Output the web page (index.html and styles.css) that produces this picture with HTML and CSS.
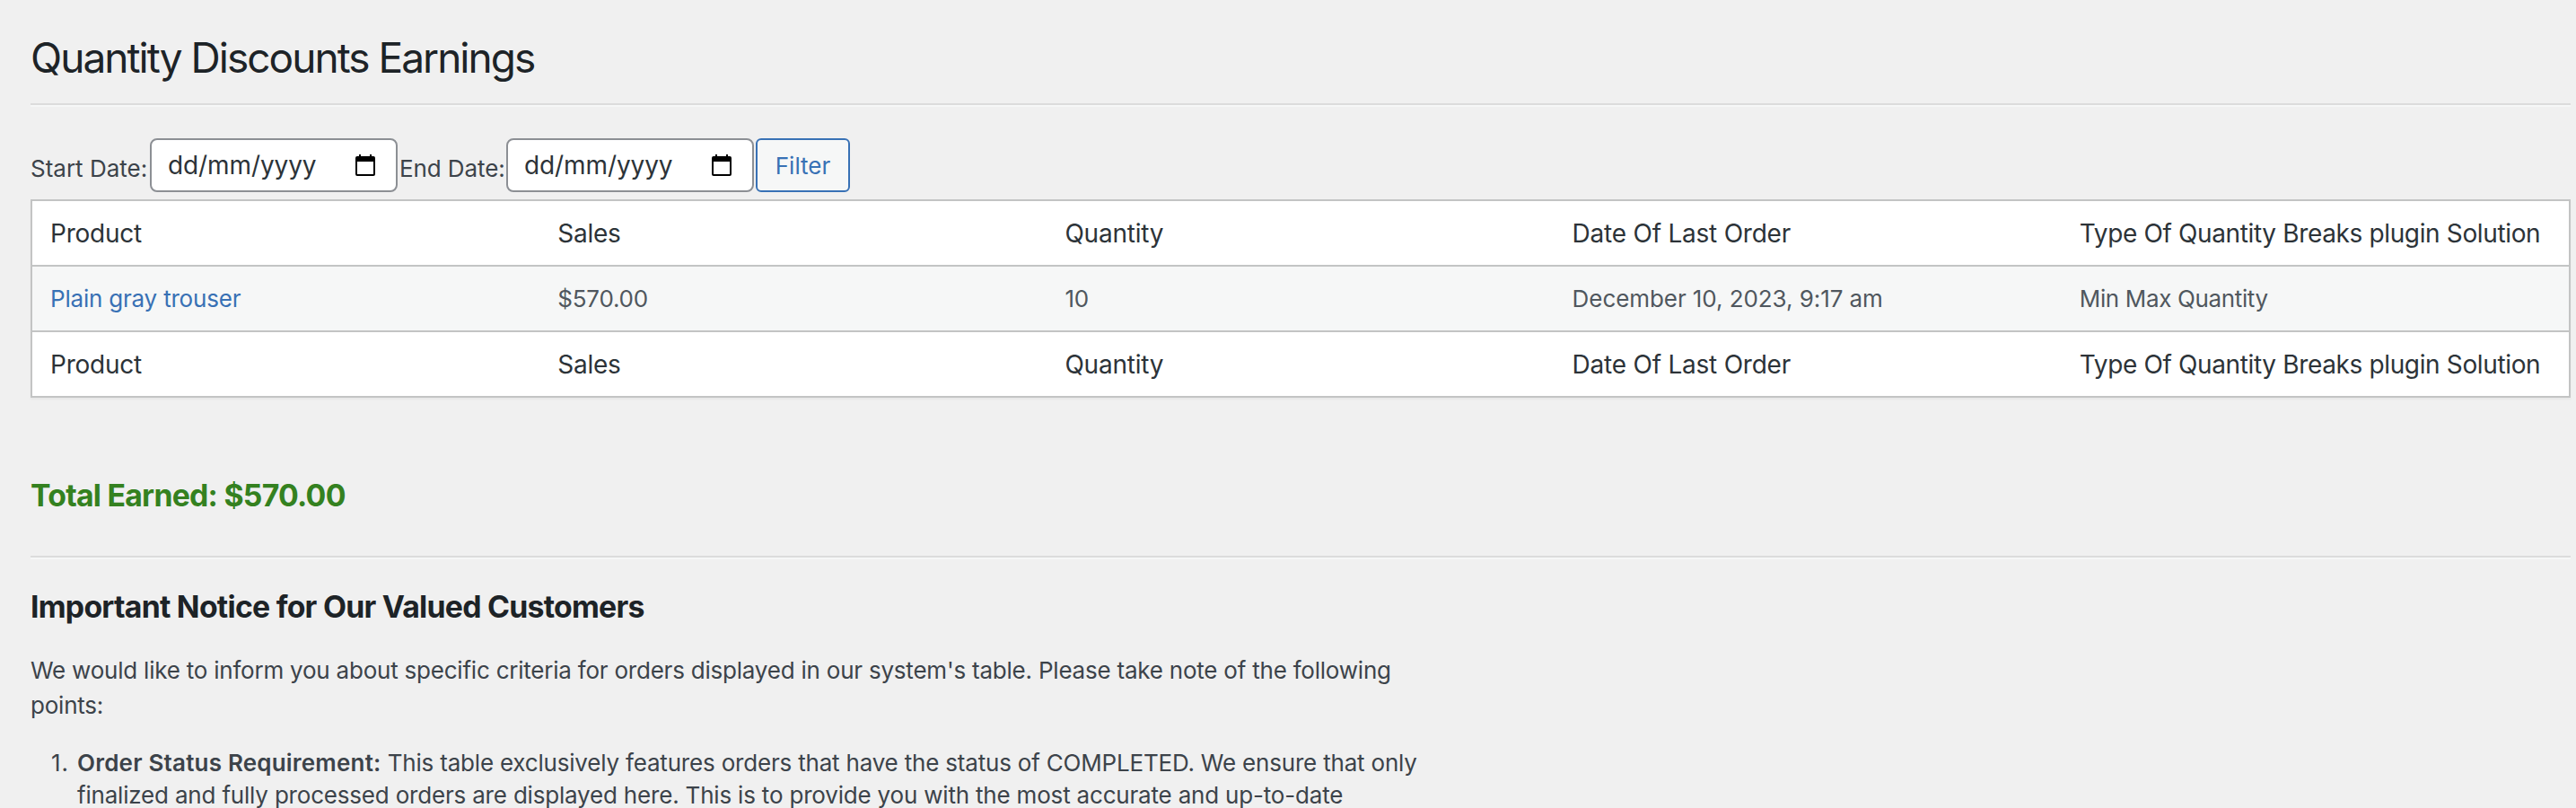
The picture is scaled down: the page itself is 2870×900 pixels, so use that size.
FILE: index.html
```html
<!DOCTYPE html>
<html lang="en">
<head>
<meta charset="utf-8">
<title>Quantity Discounts Earnings</title>
<link rel="stylesheet" href="styles.css">
</head>
<body>
<main class="wrap">
  <h1 class="title">Quantity Discounts Earnings</h1>
  <hr class="rule">
  <form class="filters">
    <label class="label label-start">Start Date:</label>
    <div class="date"><span class="placeholder">dd/mm/yyyy</span>
      <svg class="cal" viewBox="0 0 22 24"><path fill-rule="evenodd" d="M4 0h2v2h10V0h2v2h2a2 2 0 0 1 2 2v18a2 2 0 0 1-2 2H2a2 2 0 0 1-2-2V4a2 2 0 0 1 2-2h2zM2 8v14h18V8z"/></svg>
    </div>
    <label class="label label-end">End Date:</label>
    <div class="date"><span class="placeholder">dd/mm/yyyy</span>
      <svg class="cal" viewBox="0 0 22 24"><path fill-rule="evenodd" d="M4 0h2v2h10V0h2v2h2a2 2 0 0 1 2 2v18a2 2 0 0 1-2 2H2a2 2 0 0 1-2-2V4a2 2 0 0 1 2-2h2zM2 8v14h18V8z"/></svg>
    </div>
    <button class="button" type="button">Filter</button>
  </form>
  <div class="table">
    <div class="row head"><span>Product</span><span>Sales</span><span>Quantity</span><span>Date Of Last Order</span><span class="solution">Type Of Quantity Breaks plugin Solution</span></div>
    <div class="row data"><a class="link">Plain gray trouser</a><span>$570.00</span><span>10</span><span class="ordered">December 10, 2023, 9:17 am</span><span class="solution">Min Max Quantity</span></div>
    <div class="row head"><span>Product</span><span>Sales</span><span>Quantity</span><span>Date Of Last Order</span><span class="solution">Type Of Quantity Breaks plugin Solution</span></div>
  </div>
  <h2 class="total">Total Earned: $570.00</h2>
  <hr class="rule">
  <h2 class="notice-title">Important Notice for Our Valued Customers</h2>
  <p class="intro">We would like to inform you about specific criteria for orders displayed in our system's table. Please take note of the following<br>points:</p>
  <ol class="points">
    <li><span class="num">1.</span><span class="point"><b>Order Status Requirement:</b> This table exclusively features orders that have the status of COMPLETED. We ensure that only<br>finalized and fully processed orders are displayed here. This is to provide you with the most accurate and up-to-date</span></li>
  </ol>
</main>
</body>
</html>
```
FILE: styles.css
```css
* { box-sizing: border-box; }
html, body { height: 900px; overflow: hidden; }
body {
  margin: 0;
  background: #f0f0f0;
  color: #3c434a;
  font: 26px/36px Inter, "Liberation Sans", sans-serif;
  white-space: nowrap;
}
.wrap { padding: 0 6px 0 34px; }
.title {
  margin: 0;
  padding: 35px 0 20px;
  height: 115px;
  color: #1d2327;
  font-size: 46px;
  font-weight: 400;
  line-height: 58px;
  letter-spacing: -1.97px;
}
.rule { margin: 0; height: 4px; border: 0; border-top: 2px solid #dcdcdc; border-bottom: 2px solid #f6f7f7; }
.filters { display: flex; margin-top: 35px; height: 68px; }
.label { padding-top: 16px; height: 60px; }
.label-start { width: 133px; }
.label-end { width: 119px; margin-left: 2px; letter-spacing: -0.1px; }
.date {
  display: flex;
  justify-content: space-between;
  align-items: center;
  width: 276px;
  height: 60px;
  padding: 0 23px 0 18px;
  border: 2px solid #8c8f94;
  border-radius: 8px;
  background: #fff;
  color: #2c3338;
  font-size: 28px;
}
.placeholder { letter-spacing: -0.1px; }
.cal { width: 22px; height: 24px; fill: #000; }
.button {
  margin-left: 2px;
  width: 105px;
  height: 60px;
  padding: 1px 0 0;
  border: 2px solid #3871b5;
  border-radius: 6px;
  background: #f6f7f7;
  color: #3871b5;
  font: inherit;
}
.table { border: 2px solid #c3c4c4; background: #fff; box-shadow: 0 2px 2px rgba(0,0,0,.04); }
.row { display: grid; grid-template-columns: repeat(5, 1fr); height: 71px; align-items: center; }
.row > * { padding-left: 20px; min-width: 0; }
.head { color: #2c3338; font-size: 28px; letter-spacing: -0.23px; }
.data { height: 75px; border: solid #c3c4c4; border-width: 2px 0; background: #f6f7f7; color: #50575e; letter-spacing: -0.2px; }
.data .ordered { letter-spacing: -0.07px; }
.row .solution { letter-spacing: -0.36px; }
.link { color: #3871b5; }
.total, .notice-title { margin: 0; font-size: 33.8px; font-weight: 650; line-height: 44px; letter-spacing: -0.75px; }
.total { margin: 87px 0 45px; height: 44px; color: #348120; }
.notice-title { margin-top: 31px; color: #1d2327; }
.intro { margin: 29px 0 0; line-height: 39px; letter-spacing: -0.22px; }
.points { margin: 27px 0 0; padding: 0; list-style: none; line-height: 36px; letter-spacing: -0.19px; }
.points li { display: flex; }
.num { width: 52px; padding-left: 23px; flex: none; letter-spacing: 0.8px; }
.points b { font-weight: 600; letter-spacing: 0.2px; }
```
